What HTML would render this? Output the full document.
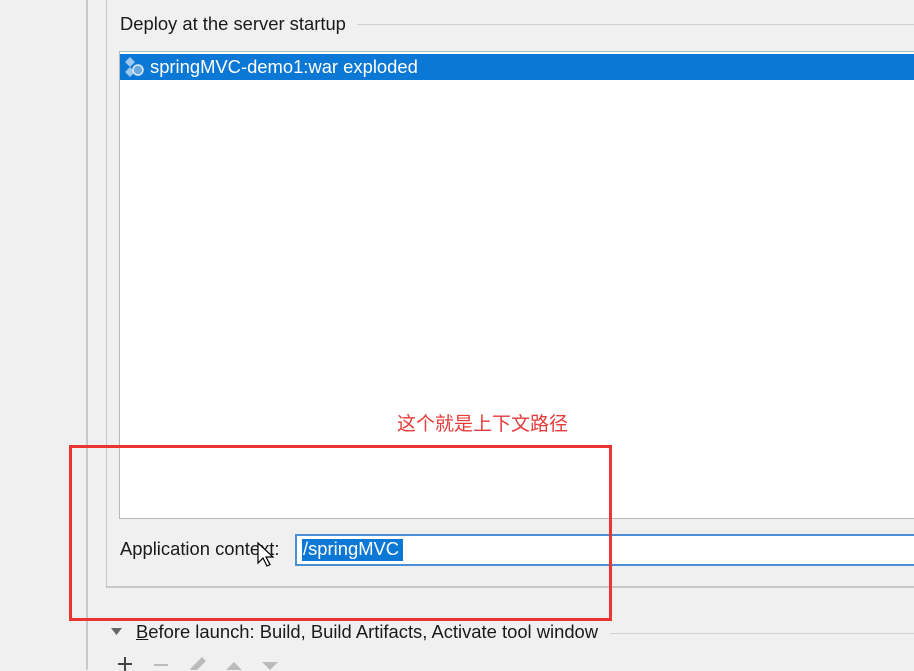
<!DOCTYPE html>
<html><head><meta charset="utf-8"><style>
body{margin:0;width:914px;height:670px;overflow:hidden;background:#f0f0f0;position:relative;font-family:"Liberation Sans","Noto Sans CJK SC",sans-serif;color:#1a1a1a}
div{position:absolute;box-sizing:border-box}
.t{font-size:18.4px;white-space:nowrap}
</style></head><body>
<div style="left:86px;top:0;width:2px;height:670px;background:#c9c9c9"></div>
<div style="left:106px;top:0;width:820px;height:588px;border-left:1px solid #c8c8c8;border-bottom:2px solid #c8c8c8"></div>
<div class="t" style="left:120px;top:13px">Deploy at the server startup</div>
<div style="left:357px;top:24px;width:560px;height:1px;background:#d0d0d0"></div>
<div style="left:119px;top:51px;width:800px;height:468px;background:#fff;border:1px solid #b8b8b8"></div>
<div style="left:120px;top:54px;width:800px;height:26px;background:#0b78d6"></div>
<svg style="position:absolute;left:123px;top:56px" width="24" height="22" viewBox="0 0 24 22"><path d="M7 1l5 5-5 5-5-5z" fill="#9fc8ee"/><path d="M7 11l5 5-5 5-5-5z" fill="#9fc8ee"/><circle cx="15" cy="14" r="5" fill="#6aa8e0" stroke="#dbeaf8" stroke-width="1.5"/></svg>
<div class="t" style="left:150px;top:56px;color:#fff">springMVC-demo1:war exploded</div>
<div style="left:397px;top:409px;font-size:19px;color:#e83a3a;white-space:nowrap">这个就是上下文路径</div>
<div class="t" style="left:120px;top:538px">Application context:</div>
<div style="left:295px;top:534px;width:630px;height:32px;background:#fff;border:2px solid #4a8fd6"></div>
<div style="left:302px;top:539px;width:101px;height:22px;background:#0b78d6"></div>
<div class="t" style="left:303px;top:538px;color:#fff">/springMVC</div>
<svg style="position:absolute;left:256px;top:541px" width="20" height="28"><path d="M2 2v20l5-5 4 8 3-1.5-4-7.5h7z" fill="#fff" stroke="#000" stroke-width="1.2"/></svg>
<div style="left:69px;top:445px;width:543px;height:176px;border:3px solid #ee3333"></div>
<svg style="position:absolute;left:111px;top:627px" width="12" height="10"><path d="M0 1h11l-5.5 7z" fill="#666"/></svg>
<div class="t" style="left:136px;top:621px"><u>B</u>efore launch: Build, Build Artifacts, Activate tool window</div>
<div style="left:610px;top:633px;width:310px;height:1px;background:#d0d0d0"></div>
<div style="left:118px;top:663px;width:14px;height:2px;background:#444"></div>
<div style="left:124px;top:657px;width:2px;height:14px;background:#444"></div>
<div style="left:154px;top:664px;width:14px;height:2px;background:#bbb"></div>
<svg style="position:absolute;left:186px;top:655px" width="100" height="15"><path d="M4 14l12-12 4 4-12 12z" fill="#bbb"/><path d="M40 15l8-8 8 8z" fill="#bbb"/><path d="M76 7h16l-8 8z" fill="#bbb"/></svg>
</body></html>
